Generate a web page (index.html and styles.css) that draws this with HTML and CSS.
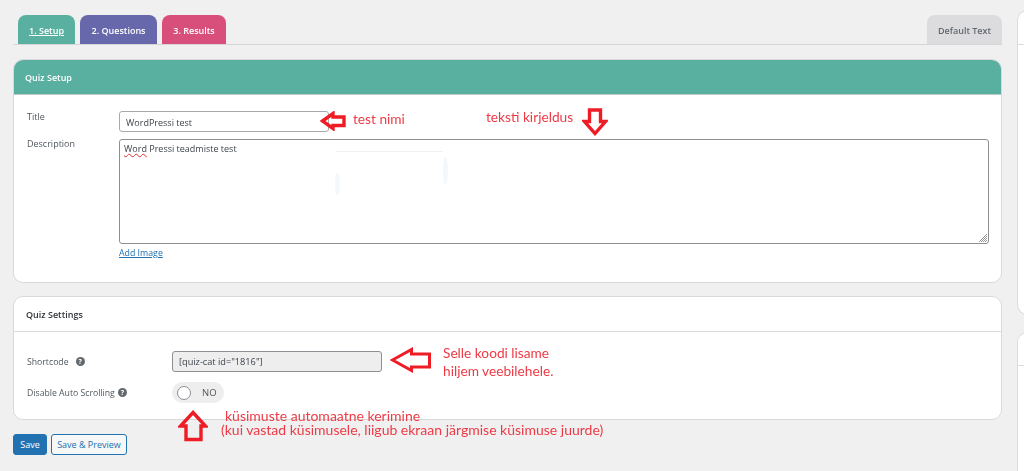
FILE: index.html
```html
<!DOCTYPE html>
<html lang="et">
<head>
<meta charset="utf-8">
<title>Quiz Setup</title>
<link rel="stylesheet" href="styles.css">
</head>
<body>
<div class="page">
  <main class="main">
    <nav class="tabs">
      <a class="tab tab-setup">1. Setup</a>
      <a class="tab tab-questions">2. Questions</a>
      <a class="tab tab-results">3. Results</a>
      <a class="tab tab-default">Default Text</a>
    </nav>

    <section class="card card-setup">
      <h2 class="card-head head-teal">Quiz Setup</h2>
      <div class="card-body setup-body">
        <div class="field field-title">
          <label class="label">Title</label>
          <div class="input title-input">WordPressi test</div>
        </div>
        <div class="field">
          <label class="label label-desc">Description</label>
          <div class="desc-wrap">
            <div class="textarea"><span class="squiggle">Word</span> Pressi teadmiste test
              <svg class="grip" width="10" height="10" viewBox="0 0 10 10"><path d="M9 1 1 9M9 3 3 9M9 5 5 9M9 7 7 9" stroke="#999" stroke-width="1" fill="none"/></svg>
            </div>
            <a class="add-image">Add Image</a>
          </div>
        </div>
      </div>
    </section>

    <section class="card card-settings">
      <h2 class="card-head head-plain">Quiz Settings</h2>
      <div class="card-body settings-body">
        <div class="setting">
          <label class="label setting-label">Shortcode <i class="help help-gap">?</i></label>
          <div class="input code-input">[quiz-cat id="1816"]</div>
        </div>
        <div class="setting">
          <label class="label setting-label">Disable Auto Scrolling <i class="help">?</i></label>
          <div class="toggle"><span class="knob"></span><span class="toggle-text">NO</span></div>
        </div>
      </div>
    </section>

    <div class="actions">
      <button class="btn btn-primary">Save</button>
      <button class="btn btn-outline">Save &amp; Preview</button>
    </div>
  </main>

  <aside class="side">
    <div class="side-card side-one"><div class="side-line"></div></div>
    <div class="side-card side-two"><div class="side-line"></div></div>
  </aside>

  <div class="erased"></div>

  <span class="note note-name">test nimi</span>
  <span class="note note-desc">teksti kirjeldus</span>
  <span class="note note-code">Selle koodi lisame<br>hiljem veebilehele.</span>
  <span class="note note-scroll">küsimuste automaatne kerimine<br>(kui vastad küsimusele, liigub ekraan järgmise küsimuse juurde)</span>

  <svg class="arrow arrow-title" width="26" height="20" viewBox="0 0 26 20"><path d="M2.500 10 13 2.500V6H24V14.500H13V17.500Z" fill="none" stroke="#ee1c25" stroke-width="3.400"/></svg>
  <svg class="arrow arrow-desc" width="26" height="28" viewBox="0 0 26 28"><path d="M7.500 2H18.500V13.500H23.500L13 25.500 2.500 13.500H7.500Z" fill="none" stroke="#ee1c25" stroke-width="3.400"/></svg>
  <svg class="arrow arrow-code" width="42" height="26" viewBox="0 0 42 26"><path d="M2.500 13 21.500 2.500V7H39.500V20H21.500V23.500Z" fill="none" stroke="#ee1c25" stroke-width="3"/></svg>
  <svg class="arrow arrow-toggle" width="30" height="32" viewBox="0 0 30 32"><path d="M15 2.500 27.500 16H23V29.500H8V16H2.500Z" fill="none" stroke="#ee1c25" stroke-width="3.400"/></svg>
</div>
</body>
</html>
```

FILE: styles.css
```css
* { box-sizing: border-box; }
html, body { margin: 0; height: 100%; }
body {
  background: #f0f0f1;
  font-family: "Open Sans", "Noto Sans", sans-serif;
  font-size: 9px;
  color: #50575e;
  overflow: hidden;
}
.page { position: relative; display: flex; width: 1024px; height: 471px; overflow: hidden; padding-left: 13px; filter: blur(0.3px); }
.main { width: 989px; flex: none; }

.tabs { display: flex; height: 45px; padding: 15px 0 0 5px; border-bottom: 1px solid #d5d6d8; }
.tab {
  display: flex; align-items: center; justify-content: center;
  height: 29px; margin-right: 5px; padding-top: 2px;
  border-radius: 8px 8px 0 0;
  color: #fff; font-weight: 600; font-size: 9px;
}
.tab-setup { width: 57px; background: #5ab0a0; text-decoration: underline; }
.tab-questions { width: 77px; margin-right: 5px; background: #6767ab; }
.tab-results { width: 64px; background: #d94f7c; }
.tab-default { width: 75px; margin: 0 0 0 auto; background: #dcdcde; color: #646970; }

.card { background: #fff; border: 1px solid #d8d9db; border-radius: 10px; overflow: hidden; }
.card-setup { margin-top: 14px; height: 224px; }
.card-settings { margin-top: 13px; height: 124px; }
.card-head { margin: 0; height: 35px; display: flex; align-items: center; padding-left: 11px; font-size: 9px; font-weight: 600; }
.head-teal { background: #5ab0a0; color: #fff; border-bottom: 1px solid #bcc9c6; }
.head-plain { color: #2f353a; border-bottom: 1px solid #dcdcde; padding-left: 12px; }

.card-body { padding-left: 13px; padding-right: 12px; }
.setup-body { padding-top: 17px; }
.field { display: flex; }
.field-title { margin-bottom: 7px; }
.label { width: 92px; flex: none; font-size: 9px; line-height: 12px; color: #50575e; }
.label-desc { margin-top: -1px; }
.input {
  display: flex; align-items: center;
  height: 21px; background: #fff;
  border: 1px solid #a7aaad; border-radius: 3px;
  font-size: 9px; color: #3c434a;
}
.title-input { width: 210px; padding: 1px 0 0 6px; margin-top: -1px; }
.field-title .label { margin-top: -1px; }
.desc-wrap { flex: 1; }
.textarea {
  position: relative; height: 105px;
  padding: 2px 4px;
  border: 1px solid #8c8f94; border-radius: 3px;
  font-size: 9px; line-height: 14px; color: #3c434a;
}
.squiggle { text-decoration: underline wavy #d9303a 1px; }
.grip { position: absolute; right: 0; bottom: 0; }
.add-image { display: block; margin-top: 3px; font-size: 8.800px; line-height: 12px; color: #2271b1; text-decoration: underline; }

.settings-body { padding-top: 19px; }
.setting { display: flex; align-items: center; height: 21px; margin-bottom: 10px; }
.setting-label { width: 145px; display: flex; align-items: center; font-size: 8.700px; }
.code-input { width: 210px; background: #eeeeef; padding-left: 6px; border-color: #8c8f94; font-size: 9.200px; }
.help {
  display: inline-flex; align-items: center; justify-content: center;
  width: 9px; height: 9px; margin-left: 3px; border-radius: 50%;
  background: #646970; color: #fff; font-style: normal; font-weight: 700; font-size: 7px; line-height: 9px;
}
.help-gap { margin-left: 7px; }
.toggle { display: flex; align-items: center; width: 52px; height: 21px; padding-left: 5px; border-radius: 11px; background: #eeeeef; }
.knob { width: 14px; height: 14px; border-radius: 50%; background: #fff; border: 1px solid #8c8f94; }
.toggle-text { margin-left: 11px; font-size: 9.500px; color: #50575e; }

.actions { display: flex; gap: 4px; margin-top: 14px; }
.btn { height: 21px; padding: 0; border-radius: 3px; font: 9px "Open Sans", "Noto Sans", sans-serif; }
.btn-primary { width: 34px; background: #2271b1; border: 1px solid #2271b1; color: #fff; }
.btn-outline { width: 76px; background: #f6f7f7; border: 1px solid #2271b1; color: #2271b1; }

.side { width: 60px; flex: none; margin-left: 15px; }
.side-card { background: #fff; border: 1px solid #dcdcde; border-right: 0; border-radius: 10px 0 0 10px; }
.side-line { border-bottom: 1px solid #dcdcde; }
.side-one { margin-top: 10px; height: 305px; }
.side-one .side-line { height: 34px; }
.side-two { margin-top: 17px; height: 200px; }
.side-two .side-line { height: 33px; }

.erased {
  position: absolute; left: 336px; top: 151px; width: 107px; height: 1px;
  background: #f1f1f1;
}
.erased::before, .erased::after {
  content: ""; position: absolute; width: 5px; border-radius: 50%; background: #f5f8fa;
}
.erased::before { left: -1px; top: 21px; height: 24px; }
.erased::after { right: -5px; top: 6px; height: 28px; }

.note { position: absolute; color: #ee3a45; font-family: Lato, "Open Sans", sans-serif; white-space: nowrap; }
.note-name { left: 353px; top: 111px; font-size: 13.700px; line-height: 16px; }
.note-desc { left: 486px; top: 109px; font-size: 13.700px; line-height: 16px; }
.note-code { left: 443px; top: 344px; font-size: 13.700px; line-height: 18px; }
.note-scroll { left: 221px; top: 409px; font-size: 14px; line-height: 14px; text-indent: 4px; }

.arrow { position: absolute; }
.arrow-title { left: 320px; top: 111px; }
.arrow-desc { left: 582px; top: 108px; }
.arrow-code { left: 390px; top: 347px; }
.arrow-toggle { left: 178px; top: 410px; }
```
